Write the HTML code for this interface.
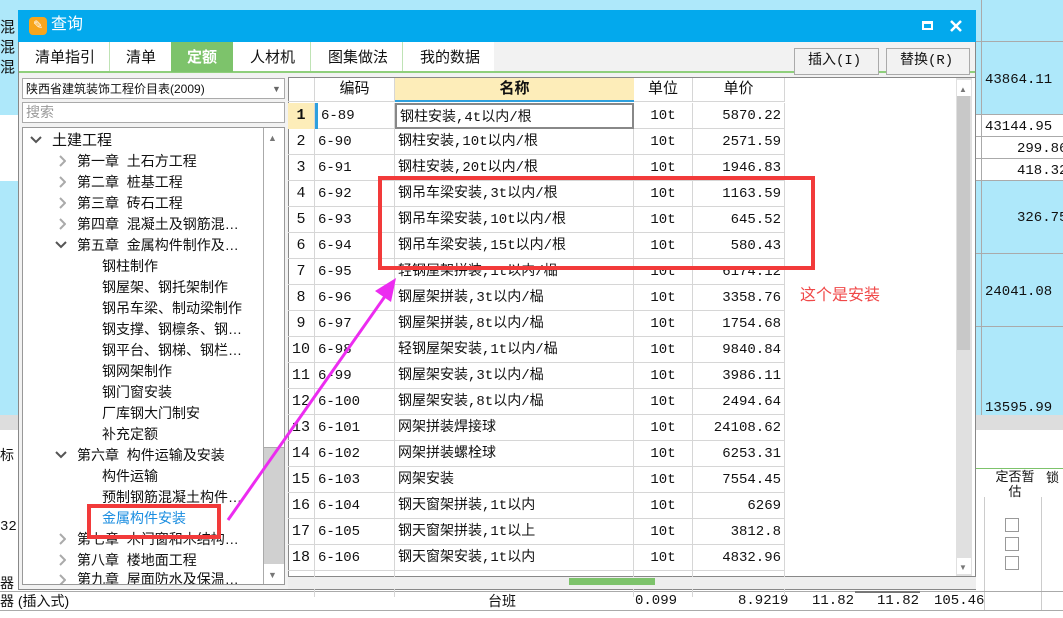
<!DOCTYPE html>
<html><head><meta charset="utf-8"><style>
*{margin:0;padding:0;box-sizing:border-box}
body{width:1063px;height:618px;overflow:hidden;background:#fff;position:relative;font-family:"Liberation Sans","Noto Sans CJK SC",sans-serif;font-size:14px;color:#111}
.a{position:absolute}
.mono{font-family:"Liberation Mono","Noto Sans CJK SC",monospace}
.row{position:absolute;left:288px;width:497px;height:26px;border-bottom:1px solid #d6d6d6}
.row div{position:absolute;top:0;height:26px;line-height:26px;border-right:1px solid #d6d6d6;white-space:nowrap;overflow:hidden}
.c0{left:0;width:27px;text-align:center;font-size:15px}
.c1{left:27px;width:80px;padding-left:3px}
.c2{left:107px;width:239px;padding-left:3px}
.c3{left:346px;width:59px;text-align:center}
.c4{left:405px;width:92px;text-align:right;padding-right:3px}
.t{position:absolute;font-size:14px;white-space:nowrap;line-height:18px}
svg.ch{position:absolute}
</style></head><body>
<div class="a" style="left:0;top:0;width:1063px;height:420px;background:#aee8fa"></div>
<div class="a" style="left:976px;top:115px;width:87px;height:66px;background:#fff"></div>
<div class="a" style="left:0;top:115px;width:18px;height:66px;background:#fff"></div>
<div class="a" style="left:981px;top:0;width:1px;height:415px;background:#aaa"></div>
<div class="a" style="left:976px;top:41px;width:87px;height:1px;background:#aaa"></div>
<div class="a" style="left:976px;top:114px;width:87px;height:1px;background:#aaa"></div>
<div class="a" style="left:976px;top:136px;width:87px;height:1px;background:#aaa"></div>
<div class="a" style="left:976px;top:158px;width:87px;height:1px;background:#aaa"></div>
<div class="a" style="left:976px;top:180px;width:87px;height:1px;background:#aaa"></div>
<div class="a" style="left:976px;top:253px;width:87px;height:1px;background:#aaa"></div>
<div class="a" style="left:976px;top:326px;width:87px;height:1px;background:#aaa"></div>
<div class="a" style="left:976px;top:415px;width:87px;height:15px;background:#ddd"></div>
<div class="a" style="left:0;top:415px;width:18px;height:15px;background:#ddd"></div>
<div class="t mono" style="left:985px;top:71px">43864.11</div>
<div class="t mono" style="left:985px;top:118px">43144.95</div>
<div class="t mono" style="left:1017px;top:140px">299.86</div>
<div class="t mono" style="left:1017px;top:162px">418.32</div>
<div class="t mono" style="left:1017px;top:209px">326.75</div>
<div class="t mono" style="left:985px;top:283px">24041.08</div>
<div class="t mono" style="left:985px;top:399px">13595.99</div>
<div class="t" style="left:0;top:18px;line-height:20px;font-size:15px;width:18px;overflow:hidden">混<br>混<br>混</div>
<div class="a" style="left:976px;top:468px;width:87px;height:1px;background:#7dc36b"></div>
<div class="t" style="left:990px;top:469px;font-size:13px;line-height:15px;text-align:center;width:50px">定否暂<br>估</div>
<div class="t" style="left:1046px;top:469px;font-size:13px">锁</div>
<div class="a" style="left:1005px;top:518px;width:14px;height:14px;border:1px solid #999;background:#fff"></div>
<div class="a" style="left:1005px;top:537px;width:14px;height:14px;border:1px solid #999;background:#fff"></div>
<div class="a" style="left:1005px;top:556px;width:14px;height:14px;border:1px solid #999;background:#fff"></div>
<div class="a" style="left:984px;top:497px;width:1px;height:113px;background:#ccc"></div>
<div class="a" style="left:1041px;top:497px;width:1px;height:113px;background:#ccc"></div>
<div class="t" style="left:0;top:446px;font-size:14px">标</div>
<div class="t mono" style="left:0;top:518px">32</div>
<div class="t" style="left:0;top:574px">器</div>
<div class="a" style="left:0;top:591px;width:1063px;height:1px;background:#aaa"></div>
<div class="a" style="left:0;top:610px;width:1063px;height:1px;background:#aaa"></div>
<div class="t" style="left:0;top:592px">器 (插入式)</div>
<div class="t" style="left:488px;top:592px">台班</div>
<div class="t mono" style="left:635px;top:592px">0.099</div>
<div class="t mono" style="left:738px;top:592px">8.9219</div>
<div class="t mono" style="left:812px;top:592px">11.82</div>
<div class="t mono" style="left:877px;top:592px">11.82</div>
<div class="t mono" style="left:934px;top:592px">105.46</div>
<div class="a" style="left:855px;top:591px;width:65px;height:2px;background:#777"></div>
<!-- dialog -->
<div class="a" style="left:18px;top:10px;width:958px;height:580px;background:#f2f2f2;border:1px solid #888"></div>
<div class="a" style="left:18px;top:10px;width:958px;height:32px;background:#03a9ed"></div>
<div class="a" style="left:29px;top:17px;width:18px;height:18px;border-radius:4px;background:#f7a51c"></div>
<div class="t" style="left:33px;top:16px;color:#fff;font-size:12px">✎</div>
<div class="t" style="left:51px;top:15px;color:#fff;font-size:16px;line-height:20px">查询</div>
<div class="a" style="left:922px;top:21px;width:11px;height:9px;border:2px solid #fff;border-top-width:3px"></div>
<svg class="a" style="left:950px;top:20px" width="12" height="12"><path d="M1 1L11 11M11 1L1 11" stroke="#fff" stroke-width="2.5"/></svg>
<div class="a" style="left:19px;top:42px;width:475px;height:30px;background:#fff"></div>
<div class="a" style="left:19px;top:71px;width:956px;height:2px;background:#8fcf7c"></div>
<div class="a" style="left:171px;top:42px;width:62px;height:30px;background:#7dc36b"></div>
<div class="t" style="left:35px;top:48px;font-size:15px;line-height:20px">清单指引</div>
<div class="a" style="left:109px;top:42px;width:1px;height:29px;background:#bfe3b5"></div>
<div class="t" style="left:126px;top:48px;font-size:15px;line-height:20px">清单</div>
<div class="t" style="left:187px;top:48px;font-size:15px;line-height:20px;color:#fff;font-weight:bold">定额</div>
<div class="t" style="left:250px;top:48px;font-size:15px;line-height:20px">人材机</div>
<div class="a" style="left:310px;top:42px;width:1px;height:29px;background:#bfe3b5"></div>
<div class="t" style="left:328px;top:48px;font-size:15px;line-height:20px">图集做法</div>
<div class="a" style="left:402px;top:42px;width:1px;height:29px;background:#bfe3b5"></div>
<div class="t" style="left:420px;top:48px;font-size:15px;line-height:20px">我的数据</div>
<div class="a" style="left:794px;top:48px;width:85px;height:27px;border:1px solid #aaa;background:#f2f2f2"></div>
<div class="t mono" style="left:808px;top:52px;font-size:14px">插入(I)</div>
<div class="a" style="left:886px;top:48px;width:84px;height:27px;border:1px solid #aaa;background:#f2f2f2"></div>
<div class="t mono" style="left:900px;top:52px;font-size:14px">替换(R)</div>
<!-- left panel -->
<div class="a" style="left:22px;top:78px;width:263px;height:21px;border:1px solid #aaa;background:#fff"></div>
<div class="t" style="left:26px;top:80px;font-size:12px">陕西省建筑装饰工程价目表(2009)</div>
<div class="t" style="left:272px;top:80px;font-size:9px;color:#666">▼</div>
<div class="a" style="left:22px;top:102px;width:263px;height:21px;border:1px solid #aaa;background:#fff"></div>
<div class="t" style="left:26px;top:103px;font-size:14px;color:#999">搜索</div>
<div class="a" style="left:22px;top:127px;width:263px;height:458px;border:1px solid #999;background:#fff"></div>
<div class="a" style="left:263px;top:128px;width:21px;height:456px;background:#d0d0d0;border-left:1px solid #aaa"></div>
<div class="a" style="left:264px;top:128px;width:20px;height:20px;background:#fff"></div>
<div class="t" style="left:268px;top:129px;font-size:9px;color:#777">▲</div>
<div class="a" style="left:264px;top:148px;width:20px;height:300px;background:#fff;border-bottom:1px solid #aaa"></div>
<div class="a" style="left:264px;top:564px;width:20px;height:20px;background:#fff"></div>
<div class="t" style="left:268px;top:566px;font-size:9px;color:#777">▼</div>
<svg class="ch" style="left:30px;top:136px" width="12" height="8"><path d="M1 1L6 6L11 1" stroke="#555" stroke-width="2" fill="none"/></svg>
<div class="t" style="left:52px;top:132px;font-size:15px">土建工程</div>
<svg class="ch" style="left:59px;top:155px" width="7" height="12"><path d="M1 1L6 6L1 11" stroke="#aaa" stroke-width="2" fill="none"/></svg><div class="t" style="left:77px;top:152px">第一章 &nbsp;土石方工程</div>
<svg class="ch" style="left:59px;top:176px" width="7" height="12"><path d="M1 1L6 6L1 11" stroke="#aaa" stroke-width="2" fill="none"/></svg><div class="t" style="left:77px;top:173px">第二章 &nbsp;桩基工程</div>
<svg class="ch" style="left:59px;top:197px" width="7" height="12"><path d="M1 1L6 6L1 11" stroke="#aaa" stroke-width="2" fill="none"/></svg><div class="t" style="left:77px;top:194px">第三章 &nbsp;砖石工程</div>
<svg class="ch" style="left:59px;top:218px" width="7" height="12"><path d="M1 1L6 6L1 11" stroke="#aaa" stroke-width="2" fill="none"/></svg><div class="t" style="left:77px;top:215px">第四章 &nbsp;混凝土及钢筋混…</div>
<svg class="ch" style="left:55px;top:241px" width="12" height="8"><path d="M1 1L6 6L11 1" stroke="#555" stroke-width="2" fill="none"/></svg><div class="t" style="left:77px;top:236px">第五章 &nbsp;金属构件制作及…</div>
<div class="t" style="left:102px;top:257px">钢柱制作</div>
<div class="t" style="left:102px;top:278px">钢屋架、钢托架制作</div>
<div class="t" style="left:102px;top:299px">钢吊车梁、制动梁制作</div>
<div class="t" style="left:102px;top:320px">钢支撑、钢檩条、钢…</div>
<div class="t" style="left:102px;top:341px">钢平台、钢梯、钢栏…</div>
<div class="t" style="left:102px;top:362px">钢网架制作</div>
<div class="t" style="left:102px;top:383px">钢门窗安装</div>
<div class="t" style="left:102px;top:404px">厂库钢大门制安</div>
<div class="t" style="left:102px;top:425px">补充定额</div>
<svg class="ch" style="left:55px;top:451px" width="12" height="8"><path d="M1 1L6 6L11 1" stroke="#555" stroke-width="2" fill="none"/></svg><div class="t" style="left:77px;top:446px">第六章 &nbsp;构件运输及安装</div>
<div class="t" style="left:102px;top:467px">构件运输</div>
<div class="t" style="left:102px;top:488px">预制钢筋混凝土构件…</div>
<div class="t" style="left:102px;top:509px;color:#1a8de0">金属构件安装</div>
<svg class="ch" style="left:59px;top:533px" width="7" height="12"><path d="M1 1L6 6L1 11" stroke="#aaa" stroke-width="2" fill="none"/></svg><div class="t" style="left:77px;top:530px">第七章 &nbsp;木门窗和木结构…</div>
<svg class="ch" style="left:59px;top:554px" width="7" height="12"><path d="M1 1L6 6L1 11" stroke="#aaa" stroke-width="2" fill="none"/></svg><div class="t" style="left:77px;top:551px">第八章 &nbsp;楼地面工程</div>
<div class="a" style="left:23px;top:572px;width:240px;height:12px;overflow:hidden"><svg class="ch" style="left:36px;top:2px" width="7" height="12"><path d="M1 1L6 6L1 11" stroke="#aaa" stroke-width="2" fill="none"/></svg><div class="t" style="left:54px;top:-2px">第九章 &nbsp;屋面防水及保温…</div></div>
<!-- grid -->
<div class="a" style="left:288px;top:77px;width:688px;height:500px;background:#fff;border:1px solid #888"></div>
<div class="a mono" style="left:288px;top:78px;width:497px;height:24px;border-bottom:1px solid #d6d6d6;font-size:15px">
<div class="a" style="left:0;top:0;width:27px;height:24px;border-right:1px solid #d6d6d6"></div>
<div class="a" style="left:27px;top:0;width:80px;height:24px;border-right:1px solid #d6d6d6;text-align:center;line-height:24px">编码</div>
<div class="a" style="left:107px;top:0;width:239px;height:24px;background:#fdedb9;border-bottom:2px solid #2ea0de;text-align:center;line-height:24px;font-weight:bold">名称</div>
<div class="a" style="left:346px;top:0;width:59px;height:24px;border-right:1px solid #d6d6d6;text-align:center;line-height:24px">单位</div>
<div class="a" style="left:405px;top:0;width:92px;height:24px;border-right:1px solid #d6d6d6;text-align:center;line-height:24px">单价</div>
</div>
<div class="mono">
<div class="row" style="top:103px"><div class="c0" style="background:#fdedb9;font-weight:bold">1</div><div class="c1" style="border-left:3px solid #2ea0de">6-89</div><div class="c2" style="border:2px solid #888">钢柱安装,4t以内/根</div><div class="c3">10t</div><div class="c4">5870.22</div></div>
<div class="row" style="top:129px"><div class="c0">2</div><div class="c1">6-90</div><div class="c2">钢柱安装,10t以内/根</div><div class="c3">10t</div><div class="c4">2571.59</div></div>
<div class="row" style="top:155px"><div class="c0">3</div><div class="c1">6-91</div><div class="c2">钢柱安装,20t以内/根</div><div class="c3">10t</div><div class="c4">1946.83</div></div>
<div class="row" style="top:181px"><div class="c0">4</div><div class="c1">6-92</div><div class="c2">钢吊车梁安装,3t以内/根</div><div class="c3">10t</div><div class="c4">1163.59</div></div>
<div class="row" style="top:207px"><div class="c0">5</div><div class="c1">6-93</div><div class="c2">钢吊车梁安装,10t以内/根</div><div class="c3">10t</div><div class="c4">645.52</div></div>
<div class="row" style="top:233px"><div class="c0">6</div><div class="c1">6-94</div><div class="c2">钢吊车梁安装,15t以内/根</div><div class="c3">10t</div><div class="c4">580.43</div></div>
<div class="row" style="top:259px"><div class="c0">7</div><div class="c1">6-95</div><div class="c2">轻钢屋架拼装,1t以内/榀</div><div class="c3">10t</div><div class="c4">6174.12</div></div>
<div class="row" style="top:285px"><div class="c0">8</div><div class="c1">6-96</div><div class="c2">钢屋架拼装,3t以内/榀</div><div class="c3">10t</div><div class="c4">3358.76</div></div>
<div class="row" style="top:311px"><div class="c0">9</div><div class="c1">6-97</div><div class="c2">钢屋架拼装,8t以内/榀</div><div class="c3">10t</div><div class="c4">1754.68</div></div>
<div class="row" style="top:337px"><div class="c0">10</div><div class="c1">6-98</div><div class="c2">轻钢屋架安装,1t以内/榀</div><div class="c3">10t</div><div class="c4">9840.84</div></div>
<div class="row" style="top:363px"><div class="c0">11</div><div class="c1">6-99</div><div class="c2">钢屋架安装,3t以内/榀</div><div class="c3">10t</div><div class="c4">3986.11</div></div>
<div class="row" style="top:389px"><div class="c0">12</div><div class="c1">6-100</div><div class="c2">钢屋架安装,8t以内/榀</div><div class="c3">10t</div><div class="c4">2494.64</div></div>
<div class="row" style="top:415px"><div class="c0">13</div><div class="c1">6-101</div><div class="c2">网架拼装焊接球</div><div class="c3">10t</div><div class="c4">24108.62</div></div>
<div class="row" style="top:441px"><div class="c0">14</div><div class="c1">6-102</div><div class="c2">网架拼装螺栓球</div><div class="c3">10t</div><div class="c4">6253.31</div></div>
<div class="row" style="top:467px"><div class="c0">15</div><div class="c1">6-103</div><div class="c2">网架安装</div><div class="c3">10t</div><div class="c4">7554.45</div></div>
<div class="row" style="top:493px"><div class="c0">16</div><div class="c1">6-104</div><div class="c2">钢天窗架拼装,1t以内</div><div class="c3">10t</div><div class="c4">6269</div></div>
<div class="row" style="top:519px"><div class="c0">17</div><div class="c1">6-105</div><div class="c2">钢天窗架拼装,1t以上</div><div class="c3">10t</div><div class="c4">3812.8</div></div>
<div class="row" style="top:545px"><div class="c0">18</div><div class="c1">6-106</div><div class="c2">钢天窗架安装,1t以内</div><div class="c3">10t</div><div class="c4">4832.96</div></div>
<div class="row" style="top:571px;height:6px;border-bottom:none"><div class="c0"></div><div class="c1"></div><div class="c2"></div><div class="c3"></div><div class="c4"></div></div>
</div>
<div class="a" style="left:956px;top:78px;width:16px;height:498px;background:#e0e0e0"></div>
<div class="a" style="left:957px;top:80px;width:14px;height:16px;background:#fff"></div>
<div class="t" style="left:959px;top:81px;font-size:8px;color:#777">▲</div>
<div class="a" style="left:957px;top:96px;width:13px;height:254px;background:#c8c8c8"></div>
<div class="a" style="left:957px;top:558px;width:14px;height:16px;background:#fff"></div>
<div class="t" style="left:959px;top:559px;font-size:8px;color:#777">▼</div>
<div class="a" style="left:288px;top:577px;width:688px;height:12px;background:#eee"></div>
<div class="a" style="left:569px;top:578px;width:86px;height:7px;background:#7dc36b"></div>
<div class="a" style="left:378px;top:176px;width:437px;height:94px;border:4px solid #f23a3a"></div>
<div class="a" style="left:87px;top:504px;width:134px;height:35px;border:4px solid #f23a3a"></div>
<div class="t" style="left:800px;top:287px;color:#f04848;font-size:16px">这个是安装</div>
<svg class="a" style="left:0;top:0" width="1063" height="618"><line x1="228" y1="520" x2="388" y2="292" stroke="#ec2cf0" stroke-width="3"/><polygon points="396,278 375,291 391,302" fill="#ec2cf0"/></svg>
</body></html>
